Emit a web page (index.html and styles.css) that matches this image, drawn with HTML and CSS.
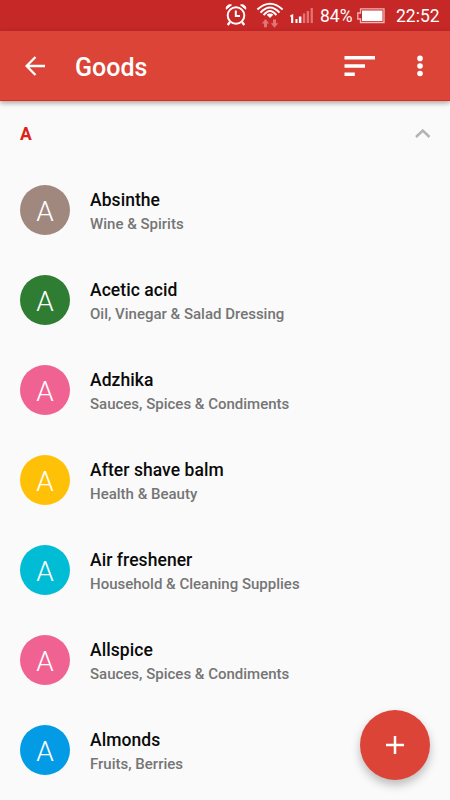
FILE: index.html
```html
<!DOCTYPE html>
<html lang="en">
<head>
<meta charset="utf-8">
<title>Goods</title>
<link rel="stylesheet" href="styles.css">
</head>
<body>
<div class="screen">
  <div class="status">
    <svg class="alarm" width="22" height="24" viewBox="0 0 22 24" fill="none" stroke="#fff">
      <circle cx="11" cy="12.500" r="8.300" stroke-width="2"/>
      <path d="M10.800 7.500v5.500H15" stroke-width="2"/>
      <path d="M1.300 6.200C.6 3.300 3.600.9 6.500 2zM20.700 6.200C21.400 3.300 18.400.9 15.500 2z" fill="#fff" stroke-width="1"/>
      <path d="M5 19L2.700 22M17 19l2.300 3" stroke-width="2.300"/>
    </svg>
    <svg class="wifi" width="28" height="28" viewBox="0 0 28 28" fill="none" stroke="#fff" stroke-width="2">
      <path d="M1.400 8.600Q14-3 26.600 8.600M4.500 11.600Q14 1.200 23.500 11.600M7.600 14.200Q14 5.800 20.400 14.200"/>
      <path d="M14 12.600q2.200 0 3.300 1.200L14 17l-3.300-3.200Q11.800 12.600 14 12.600z" fill="#fff" stroke="none"/>
      <path d="M9.500 18l3.700 4.500H11v3.800H8v-3.800H5.800zM18.500 26.800l-3.700-4.500H17V18.500h3v3.800h2.200z" fill="#e57373" stroke="none"/>
    </svg>
    <svg class="signal" width="24" height="17" viewBox="0 0 24 17">
      <path d="M.3 7.300L3.200 6v9H1.100V8.600L.3 9zM5.500 11h2v4h-2zM8.900 8.500h2.500V15H8.900z" fill="#fff"/>
      <path d="M12.900 5.500h2.300V15h-2.300zM16.700 3H19v12h-2.300zM20.600 0h2.300v15h-2.300z" fill="#e57373"/>
    </svg>
    <span class="percent">84%</span>
    <svg class="battery" width="28" height="16" viewBox="0 0 28 16">
      <path d="M3.500.800h23.500v13.700H3.500V11H.8V5h2.700z" fill="none" stroke="#f3b4b4" stroke-width="1.300"/>
      <path d="M5 2.500h20.500v10.500H5z" fill="#fff"/>
    </svg>
    <span class="clock">22:52</span>
  </div>
  <header class="toolbar">
    <svg class="back" width="20" height="20" viewBox="0 0 20 20" fill="none" stroke="#fff" stroke-width="2.300"><path d="M20 10H2M10.500 1L1.600 10l8.900 9"/></svg>
    <h1>Goods</h1>
    <svg class="sort" width="32" height="22" viewBox="0 0 32 22" fill="#fff"><path d="M.5 1H31v3.400H.5zM.5 9.300H21v3.400H.5zM.5 17.600H10.800V21H.5z"/></svg>
    <svg class="more" width="6" height="22" viewBox="0 0 6 22" fill="#fff"><circle cx="3" cy="3.400" r="2.800"/><circle cx="3" cy="11" r="2.800"/><circle cx="3" cy="18.500" r="2.800"/></svg>
  </header>
  <main>
    <div class="section">
      <span>A</span>
      <svg width="16" height="10" viewBox="0 0 16 10" fill="none" stroke="#b3b3b3" stroke-width="2.500"><path d="M1 8L7.800 1.600l6.700 6.400"/></svg>
    </div>
    <ul class="list">
      <li><i class="avatar brown">A</i><div><b>Absinthe</b><p>Wine &amp; Spirits</p></div></li>
      <li><i class="avatar green">A</i><div><b>Acetic acid</b><p>Oil, Vinegar &amp; Salad Dressing</p></div></li>
      <li><i class="avatar pink">A</i><div><b>Adzhika</b><p>Sauces, Spices &amp; Condiments</p></div></li>
      <li><i class="avatar amber">A</i><div><b>After shave balm</b><p>Health &amp; Beauty</p></div></li>
      <li><i class="avatar cyan">A</i><div><b>Air freshener</b><p>Household &amp; Cleaning Supplies</p></div></li>
      <li><i class="avatar pink">A</i><div><b>Allspice</b><p>Sauces, Spices &amp; Condiments</p></div></li>
      <li><i class="avatar blue">A</i><div><b>Almonds</b><p>Fruits, Berries</p></div></li>
    </ul>
  </main>
  <button class="fab" aria-label="Add"><svg width="18" height="18" viewBox="0 0 18 18" stroke="#fff" stroke-width="2.500"><path d="M9 0v18M0 9h18"/></svg></button>
</div>
</body>
</html>
```
FILE: styles.css
```css
* { box-sizing: border-box; margin: 0; padding: 0; }
body { font-family: Roboto, sans-serif; background: #fafafa; }
.screen { position: relative; width: 450px; height: 800px; overflow: hidden; background: #fafafa; }
svg { display: block; flex: none; }
.status { display: flex; height: 31px; padding-left: 225px; background: #c62828; color: #fff; font-size: 17.5px; line-height: 33px; }
.alarm { margin-top: 3px; }
.wifi { margin: 1px 0 0 9px; }
.signal { margin: 8px 0 0 6px; }
.percent { width: 37px; margin-left: 6px; }
.battery { margin-top: 8px; }
.clock { margin-left: 11px; }
.toolbar { position: relative; display: flex; align-items: center; height: 70px; padding: 0 27px 0 25px; background: #db4437; color: #fff; border-bottom: 1px solid #dd2c1b; box-shadow: 0 2px 5px rgba(0,0,0,.35); }
h1 { flex: 1; margin-left: 30px; padding-top: 4px; font-size: 25px; font-weight: 500; line-height: 31px; }
.sort { margin-right: 41px; }
.section { display: flex; align-items: center; justify-content: space-between; height: 64px; padding: 2px 19px 0 20px; color: #db2218; font-size: 17.5px; font-weight: 700; }
.list { list-style: none; }
.list li { display: flex; align-items: center; height: 90px; padding-left: 20px; }
.avatar { display: flex; align-items: center; justify-content: center; width: 50px; height: 50px; margin-right: 20px; padding-top: 2px; border-radius: 50%; color: #fff; font-size: 28px; font-style: normal; font-weight: 300; }
.brown { background: #a1887f; }
.green { background: #2e7d32; }
.pink { background: #f06292; }
.amber { background: #ffc107; }
.cyan { background: #00bcd4; }
.blue { background: #039be5; }
.list b { display: block; margin-top: 3px; color: #0a0a0a; font-size: 17.5px; font-weight: 500; line-height: 25px; letter-spacing: .06px; }
.list p { color: #757575; font-size: 15px; font-weight: 500; line-height: 23px; }
.fab { position: absolute; right: 20px; bottom: 20px; display: flex; align-items: center; justify-content: center; width: 70px; height: 70px; border: 0; border-radius: 50%; background: #db4437; box-shadow: 0 5px 10px rgba(0,0,0,.25); }
```
